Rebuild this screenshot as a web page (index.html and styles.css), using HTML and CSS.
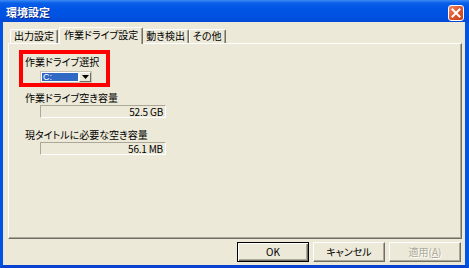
FILE: index.html
```html
<!DOCTYPE html>
<html lang="ja">
<head>
<meta charset="utf-8">
<link rel="stylesheet" href="styles.css">
</head>
<body>
<div class="window">
  <div class="titlebar">
    <span class="title">環境設定</span>
    <span class="close">
      <svg width="10" height="10" viewBox="0 0 10 10"><path d="M1.5 1.5 L8.5 8.5 M8.5 1.5 L1.5 8.5" stroke="#fff" stroke-width="2" stroke-linecap="square"/></svg>
    </span>
  </div>
  <div class="frame">
    <div class="tabs">
      <div class="tab">出力設定</div>
      <div class="tab active">作業ドライブ設定</div>
      <div class="tab">動き検出</div>
      <div class="tab">その他</div>
    </div>
    <div class="panel">
      <div class="mark">
        <div class="label inner">作業ドライブ選択</div>
        <div class="combo">
          <span class="sel"><span class="focus">C:</span></span>
          <span class="drop"><svg width="7" height="4" viewBox="0 0 7 4"><path d="M0 0 H7 L3.5 4 Z" fill="#000"/></svg></span>
        </div>
      </div>
      <div class="label l2">作業ドライブ空き容量</div>
      <div class="field">52.5 GB</div>
      <div class="label l3">現タイトルに必要な空き容量</div>
      <div class="field">56.1 MB</div>
    </div>
    <div class="buttons">
      <div class="btn default">OK</div>
      <div class="btn">キャンセル</div>
      <div class="btn disabled">適用(<u>A</u>)</div>
    </div>
  </div>
</div>
</body>
</html>
```

FILE: styles.css
```css
html, body {
  margin: 0;
  padding: 0;
}
body {
  width: 469px;
  height: 268px;
  overflow: hidden;
  font-family: "Noto Sans CJK JP", "Liberation Sans", sans-serif;
  font-feature-settings: "palt";
  font-size: 10px;
  color: #000;
}
.window {
  width: 469px;
  height: 268px;
  display: flex;
  flex-direction: column;
}
.titlebar {
  height: 22px;
  flex: none;
  background: linear-gradient(#3d8bf5 0px, #0a5fe8 3px, #0055e6 8px, #0052e2 16px, #0349d6 22px);
  display: flex;
  align-items: center;
  justify-content: space-between;
  padding: 0 5px 0 6px;
  box-sizing: border-box;
}
.title {
  color: #fff;
  font-weight: bold;
  font-size: 11px;
  line-height: 13px;
  padding-top: 2px;
  text-shadow: 1px 1px 0 #0a2a8a;
}
.close {
  width: 16px;
  height: 16px;
  box-sizing: border-box;
  border: 1px solid #fff;
  border-radius: 3px;
  background: linear-gradient(135deg, #f08a66, #e0542c 50%, #c8401c);
  display: flex;
  align-items: center;
  justify-content: center;
  margin-top: 3px;
}
.frame {
  flex: 1;
  background: #ece9d8;
  border-left: 3px solid #0054e3;
  border-right: 4px solid #0054e3;
  border-bottom: 3px solid #0842d0;
  padding: 5px 3px 3px 5px;
  display: flex;
  flex-direction: column;
}
.tabs {
  display: flex;
  align-items: flex-end;
  height: 16px;
  padding-left: 2px;
}
.tab {
  height: 14px;
  box-sizing: border-box;
  line-height: 12px;
  padding: 0 3px;
  border: 1px solid #fff;
  border-bottom: none;
  border-right: 1px solid #716f64;
  box-shadow: inset -1px 0 0 #aca899;
  border-radius: 2px 2px 0 0;
  background: #ece9d8;
  white-space: nowrap;
}
.tab.active {
  height: 17px;
  margin: 0 -1px -1px 1px;
  padding: 1px 4px 0;
  position: relative;
  z-index: 1;
}
.panel {
  height: 196px;
  box-sizing: border-box;
  border: 1px solid #fff;
  border-right-color: #716f64;
  border-bottom-color: #716f64;
  box-shadow: inset -1px -1px 0 #aca899;
  padding: 6px 0 0 10px;
}
.mark {
  width: 91px;
  height: 37px;
  box-sizing: border-box;
  border: 4px solid #ff0000;
  padding: 2px 0 0 2px;
}
.label {
  line-height: 12px;
  height: 12px;
  white-space: nowrap;
  margin-left: 6px;
}
.label.inner {
  margin-left: 0;
}
.combo {
  margin: 3px 0 0 15px;
  width: 52px;
  height: 12px;
  box-sizing: border-box;
  border: 1px solid #c8c4b4;
  background: #fff;
  display: flex;
}
.sel {
  flex: 1;
  background: #316ac5;
  margin: 1px;
  display: flex;
}
.focus {
  flex: 1;
  color: #fff;
  font-family: "Liberation Sans", sans-serif;
  font-size: 9px;
  line-height: 8px;
  padding-left: 1px;
}
.drop {
  width: 12px;
  box-sizing: border-box;
  background: #ece9d8;
  border: 1px solid #fff;
  border-right-color: #716f64;
  border-bottom-color: #716f64;
  display: flex;
  align-items: center;
  justify-content: center;
}
.l2 {
  margin-top: 5px;
}
.l3 {
  margin-top: 11px;
}
.field {
  margin: 1px 0 0 21px;
  width: 126px;
  height: 13px;
  box-sizing: border-box;
  border: 1px solid #aca899;
  border-right-color: #fff;
  border-bottom-color: #fff;
  text-align: right;
  padding-right: 2px;
  font-size: 10px;
  line-height: 11px;
  letter-spacing: -0.2px;
}
.buttons {
  display: flex;
  justify-content: flex-end;
  gap: 4px;
  margin-top: 3px;
  padding-right: 1px;
}
.btn {
  width: 72px;
  height: 20px;
  box-sizing: border-box;
  border: 1px solid #fff;
  border-right-color: #716f64;
  border-bottom-color: #716f64;
  box-shadow: inset -1px -1px 0 #aca899;
  text-align: center;
  line-height: 17px;
  font-size: 10px;
  background: #ece9d8;
}
.btn.default {
  border: 1px solid #000;
  box-shadow: inset 1px 1px 0 #fff, inset -1px -1px 0 #716f64, inset -2px -2px 0 #aca899;
}
.btn.disabled {
  color: #aca899;
  text-shadow: 1px 1px 0 #fff;
}
.btn.disabled u {
  text-decoration-thickness: 1px;
}
```
